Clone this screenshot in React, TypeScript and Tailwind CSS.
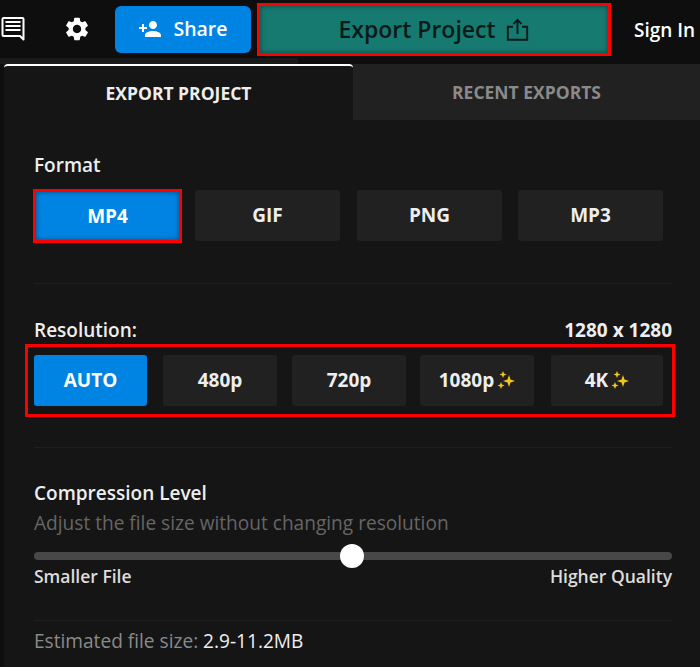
import React from 'react';
import { MdPersonAdd, MdSettings } from 'react-icons/md';

const formats = ['MP4', 'GIF', 'PNG', 'MP3'];

function ChatIcon() {
  return (
    <svg width="26" height="26" viewBox="0 0 26 26" fill="none" className="text-white">
      <path d="M3.500 2h19a1 1 0 0 1 1 1v20.500l-3.500-3.500H3.500a1 1 0 0 1-1-1V3a1 1 0 0 1 1-1z" stroke="currentColor" strokeWidth="2" strokeLinejoin="round" />
      <path d="M5.500 6h15M5.500 10h15M5.500 14h15" stroke="currentColor" strokeWidth="2" />
    </svg>
  );
}

function ShareUpIcon() {
  return (
    <svg width="25" height="25" viewBox="0 0 22 22" fill="none" stroke="#0b1a18" strokeWidth="1.7">
      <path d="M7 8.500H2.500v11.500h17V8.500H15" />
      <path d="M11 15V2.500M7.500 6L11 2.500 14.500 6" />
    </svg>
  );
}

function Sparkles() {
  return (
    <svg width="18" height="20" viewBox="0 0 18 20" fill="#f5c518" className="ml-[3px]">
      <path d="M12 4l1.500 4.500L18 10l-4.500 1.500L12 16l-1.500-4.500L6 10l4.500-1.500z" />
      <path d="M6 0l1 2.500L9.500 3.500 7 4.500 6 7 5 4.500 2.500 3.500 5 2.500z" />
      <path d="M4 11l1 2.500 2.500 1-2.500 1-1 2.500-1-2.500-2.500-1 2.500-1z" />
    </svg>
  );
}

function OptionButton({ label, active, sparkle, className }: { label: string; active?: boolean; sparkle?: boolean; className: string }) {
  return (
    <div
      className={`flex items-center justify-center h-[51px] rounded-[3px] text-[19px] font-bold ${
        active ? 'bg-[#0084e3] text-white' : 'bg-[#212121] text-[#eeeeee]'
      } ${className}`}
    >
      {label}
      {sparkle && <Sparkles />}
    </div>
  );
}

export default function App() {
  return (
    <div className="w-[700px] h-[667px] overflow-hidden bg-[#0e0e0e] font-['Open_Sans',sans-serif]">
      {/* top bar */}
      <div className="flex items-center h-[58px]">
        <ChatIcon />
        <MdSettings className="ml-[37px] text-white" size={28} />
        <div className="ml-[24px] flex items-center justify-center gap-[11px] w-[136px] h-[47px] rounded-[6px] bg-[#0084e3] text-white text-[19.5px] font-semibold">
          <MdPersonAdd size={24} />
          Share
        </div>
        <div className="ml-[6px] flex items-center justify-center gap-[9px] w-[354px] h-[53px] border-[3px] border-[#ff0000] bg-[#167a70] shadow-[inset_0_0_5px_rgba(0,0,0,0.45)] text-[#0b1a18] text-[23px] font-semibold">
          Export Project
          <ShareUpIcon />
        </div>
        <div className="ml-[23px] mt-[3px] text-white text-[19px] font-semibold whitespace-nowrap">Sign In</div>
      </div>
      <div className="w-[298px] h-[6px] bg-[#191919]" />

      {/* panel */}
      <div className="ml-[4px] h-[603px] bg-[#151515]">
        <div className="flex h-[56px]">
          <div className="flex items-center justify-center w-[349px] pt-px rounded-t-[4px] border-t-2 border-white text-[#eeeeee] text-[17.5px] font-bold">
            EXPORT PROJECT
          </div>
          <div className="flex items-center justify-center flex-1 bg-[#212121] text-[#8a8a8a] text-[17.5px] font-bold">
            RECENT EXPORTS
          </div>
        </div>

        <div className="pl-[30px] pr-[28px]">
          <div className="pt-[33px] h-[69px] text-[#eeeeee] text-[19px] font-semibold leading-[24px]">Format</div>
          <div className="flex gap-[13px] -ml-px w-[631px]">
            <OptionButton label={formats[0]} active className="w-[149px] h-[54px] border-[3px] border-[#ff0000] rounded-none shadow-[inset_0_0_5px_rgba(0,0,0,0.45)]" />
            <OptionButton label={formats[1]} className="w-[145px] mt-px" />
            <OptionButton label={formats[2]} className="w-[145px] mt-px ml-[4px]" />
            <OptionButton label={formats[3]} className="w-[145px] mt-px ml-[3px]" />
          </div>

          <div className="mt-[40px] border-t border-[#1f1f1f]" />

          <div className="flex justify-between items-center mt-[34px] h-[24px] text-[#eeeeee] text-[19px] font-semibold">
            <span>Resolution:</span>
            <span className="font-bold">1280 x 1280</span>
          </div>

          <div className="flex items-center -ml-[9px] mt-[2px] w-[650px] h-[73px] border-[3px] border-[#ff0000] px-[6px]">
            <OptionButton label="AUTO" active className="w-[113px]" />
            <OptionButton label="480p" className="w-[114px] ml-[16px]" />
            <OptionButton label="720p" className="w-[114px] ml-[15px]" />
            <OptionButton label="1080p" sparkle className="w-[114px] ml-[14px]" />
            <OptionButton label="4K" sparkle className="w-[112px] ml-[17px]" />
          </div>

          <div className="mt-[30px] border-t border-[#1f1f1f]" />

          <div className="mt-[33px] text-[#eeeeee] text-[19px] font-semibold leading-[24px]">Compression Level</div>
          <div className="mt-[6px] text-[#666666] text-[19.1px] leading-[24px]">
            Adjust the file size without changing resolution
          </div>

          <div className="relative mt-[17px] h-[8px] rounded-full bg-[#484848]">
            <div className="absolute left-[306px] -top-[8px] w-[24px] h-[24px] rounded-full bg-white" />
          </div>

          <div className="flex justify-between mt-[4px] text-[#dddddd] text-[17.5px] font-semibold leading-[24px]">
            <span>Smaller File</span>
            <span>Higher Quality</span>
          </div>

          <div className="mt-[32px] border-t border-[#1f1f1f]" />

          <div className="mt-[8px] text-[#8a8a8a] text-[19.1px] leading-[24px]">
            Estimated file size: <span className="text-[#eeeeee]">2.9-11.2MB</span>
          </div>
        </div>
      </div>
    </div>
  );
}
